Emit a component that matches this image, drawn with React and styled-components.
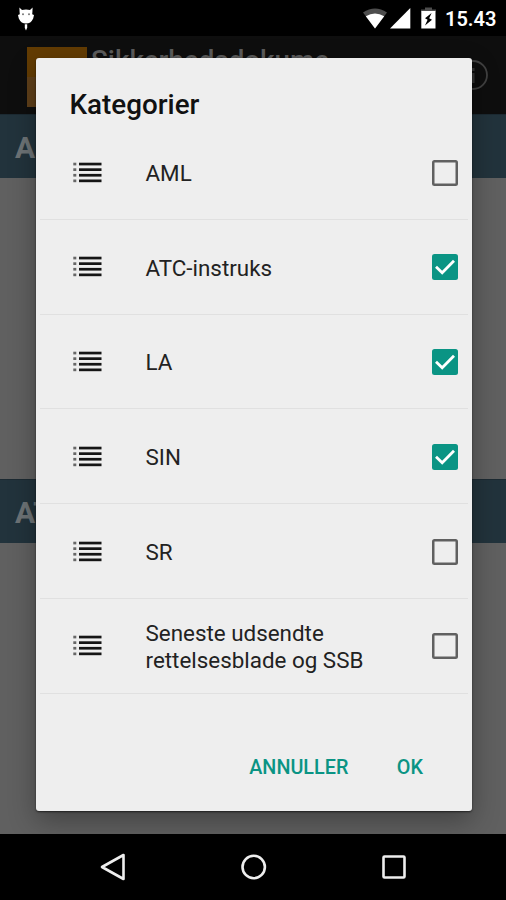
import React from 'react'
import styled, { createGlobalStyle } from 'styled-components'

const categories = [
    { name: 'AML', checked: false },
    { name: 'ATC-instruks', checked: true },
    { name: 'LA', checked: true },
    { name: 'SIN', checked: true },
    { name: 'SR', checked: false },
    { name: 'Seneste udsendte rettelsesblade og SSB', checked: false },
]

function StatusBar() {
    return (
        <Status>
            <svg className="debug" width="18" height="26" viewBox="0 0 18 26" fill="#fff">
                <path d="M2.4 .6 L5 3 Q9 1.8 13 3 L15.6 .6 L15.4 5 L15.2 7.2 L17 8 L16.2 11.4 Q13.8 16.6 9 16.6 Q4.2 16.6 1.8 11.4 L1 8 L2.8 7.2 L2.6 5Z" />
                <path d="M7.8 17.2h2.4v3.5L9 23.5l-1.2-2.8z" />
                <circle cx="6" cy="7.3" r="1" fill="#777" />
                <circle cx="12" cy="7.3" r="1" fill="#777" />
            </svg>
            <svg width="24" height="21" viewBox="0 0 24 21">
                <path d="M0 4.5 Q12 -3.5 24 4.5 L12 20.5Z" fill="#4d4d4d" />
                <path d="M2.8 8.2 Q12 2.6 21.2 8.2 L12 20.5Z" fill="#fff" />
            </svg>
            <svg className="signal" width="21" height="21" viewBox="0 0 21 21">
                <path d="M20.3 0v20.5H0z" fill="#fff" />
            </svg>
            <svg className="battery" width="15" height="22" viewBox="0 0 15 22">
                <path d="M4 .5h7v2h4v2H0v-2h4z" fill="#4d4d4d" />
                <path d="M.3 4h14.2v17.5H.3z" fill="#fff" />
                <path d="M10.6 6 4 11.2l2.6 1.6L4 18.4l7-5.6-2.8-1.6z" fill="#000" />
            </svg>
            <Clock>15.43</Clock>
        </Status>
    )
}

function ListIcon() {
    return (
        <svg width="29" height="22" viewBox="0 0 29 22">
            {[0.7, 6.3, 11.9, 17.5].map((y) => (
                <g key={y}>
                    <rect x="0.3" y={y} width="3" height="2.7" fill="#666" />
                    <rect x="6" y={y} width="22.5" height="2.7" fill="#151515" />
                </g>
            ))}
        </svg>
    )
}

function Category({ name, checked }) {
    return (
        <Row>
            <ListIcon />
            <Name>{name}</Name>
            <Checkbox $checked={checked} role="checkbox" aria-checked={checked}>
                {checked && (
                    <svg width="26" height="26" viewBox="0 0 26 26">
                        <path d="M4 12.8l6.2 6L22 6.8" fill="none" stroke="#fff" strokeWidth="2.8" />
                    </svg>
                )}
            </Checkbox>
        </Row>
    )
}

function App() {
    return (
        <Screen>
            <GlobalStyle />
            <StatusBar />
            <AppBar>
                <Logo />
                <h1>Sikkerhedsdokume...</h1>
                <svg width="30" height="30" viewBox="0 0 30 30">
                    <circle cx="15" cy="15" r="14" fill="none" stroke="#414141" strokeWidth="1.8" />
                    <path d="M12.5 8h4v3h-4zM12.5 13h4v10h-4z" fill="#363636" />
                </svg>
            </AppBar>
            <SectionHeader>AML</SectionHeader>
            <Content $height={301} />
            <SectionHeader>ATC-instruks</SectionHeader>
            <Content $height={291} />
            <NavBar>
                <svg width="30" height="30" viewBox="0 0 30 30">
                    <path d="M25.5 3v24L4 15z" />
                </svg>
                <svg width="30" height="30" viewBox="0 0 30 30">
                    <circle cx="14.7" cy="15" r="11.2" />
                </svg>
                <svg width="30" height="30" viewBox="0 0 30 30">
                    <rect x="4.5" y="4.5" width="21" height="21" rx="1" />
                </svg>
            </NavBar>
            <Dialog>
                <h2>Kategorier</h2>
                <List>
                    {categories.map((category) => (
                        <Category key={category.name} {...category} />
                    ))}
                </List>
                <Actions>
                    <button>ANNULLER</button>
                    <button>OK</button>
                </Actions>
            </Dialog>
        </Screen>
    )
}

export default App

const GlobalStyle = createGlobalStyle`
    * {
        box-sizing: border-box;
    }
    body {
        margin: 0;
        background: #000;
        font-family: Roboto, sans-serif;
    }
`;

const Screen = styled.div`
    position: relative;
    width: 506px;
    height: 900px;
    overflow: hidden;
    background: #000;
`;

const Status = styled.div`
    display: flex;
    align-items: flex-start;
    height: 36px;
    padding: 8px 10px 0 17px;

    .debug {
        margin-right: auto;
        margin-top: -1px;
    }
    .signal {
        margin-left: 3px;
    }
    .battery {
        margin-left: 10px;
        margin-top: -1px;
    }
`;

const Clock = styled.span`
    width: 51px;
    margin-left: 9px;
    color: #fff;
    font-size: 20px;
    font-weight: 600;
    line-height: 23px;
    white-space: nowrap;
`;

const AppBar = styled.div`
    display: flex;
    align-items: flex-start;
    height: 78px;
    padding: 11px 18px 0 27px;
    background: #0e0e0e;

    h1 {
        flex: 1;
        margin: -1px 0 0 4px;
        color: #5c5c5c;
        font-size: 27.8px;
        font-weight: 500;
        line-height: 30px;
        white-space: nowrap;
    }
    svg {
        margin-top: 13px;
    }
`;

const Logo = styled.div`
    width: 60px;
    height: 60px;
    background: linear-gradient(#633c03 0, #633c03 50%, #60401a 50%);
`;

const SectionHeader = styled.div`
    height: 64px;
    padding-left: 15px;
    background: #22333c;
    border-top: 1px solid #1c2a32;
    color: #6d7376;
    font-size: 30px;
    font-weight: 700;
    line-height: 66px;
`;

const Content = styled.div`
    height: ${(props) => props.$height}px;
    background: #606060;
`;

const NavBar = styled.div`
    display: flex;
    justify-content: space-between;
    align-items: center;
    height: 66px;
    padding: 0 97px 0 98px;
    background: #000;

    svg {
        fill: none;
        stroke: #eee;
        stroke-width: 2.6;
        stroke-linejoin: round;
    }
`;

const Dialog = styled.div`
    position: absolute;
    top: 58px;
    left: 36px;
    width: 435.5px;
    height: 752.5px;
    border-radius: 3px;
    background: #eee;
    box-shadow: 0 1px 2px rgba(0, 0, 0, 0.6), 0 10px 28px rgba(0, 0, 0, 0.32);

    h2 {
        margin: 0;
        height: 67.2px;
        padding: 31px 0 0 33.5px;
        color: #111;
        font-size: 27.8px;
        font-weight: 500;
        line-height: 32px;
    }
`;

const List = styled.div`
    margin: 0 4px;
`;

const Row = styled.div`
    display: flex;
    align-items: center;
    height: 94.75px;
    padding: 1px 10px 0 33px;
    border-bottom: 1px solid #e0e0e0;
`;

const Name = styled.div`
    width: 235px;
    margin-left: 43.5px;
    margin-right: auto;
    padding-top: 1px;
    color: #222;
    font-size: 22.4px;
    line-height: 26.5px;
`;

const Checkbox = styled.div`
    width: 26px;
    height: 26px;
    border-radius: 2.5px;
    background: ${(props) => (props.$checked ? '#0a9484' : 'transparent')};
    box-shadow: ${(props) => (props.$checked ? 'none' : 'inset 0 0 0 2.5px #606060')};

    svg {
        display: block;
    }
`;

const Actions = styled.div`
    display: flex;
    justify-content: flex-end;
    gap: 48.5px;
    padding: 62px 48.5px 0 0;

    button {
        padding: 0;
        border: none;
        background: none;
        color: #0a9484;
        font-family: inherit;
        font-size: 19.8px;
        font-weight: 500;
        line-height: 24px;
    }
`;
